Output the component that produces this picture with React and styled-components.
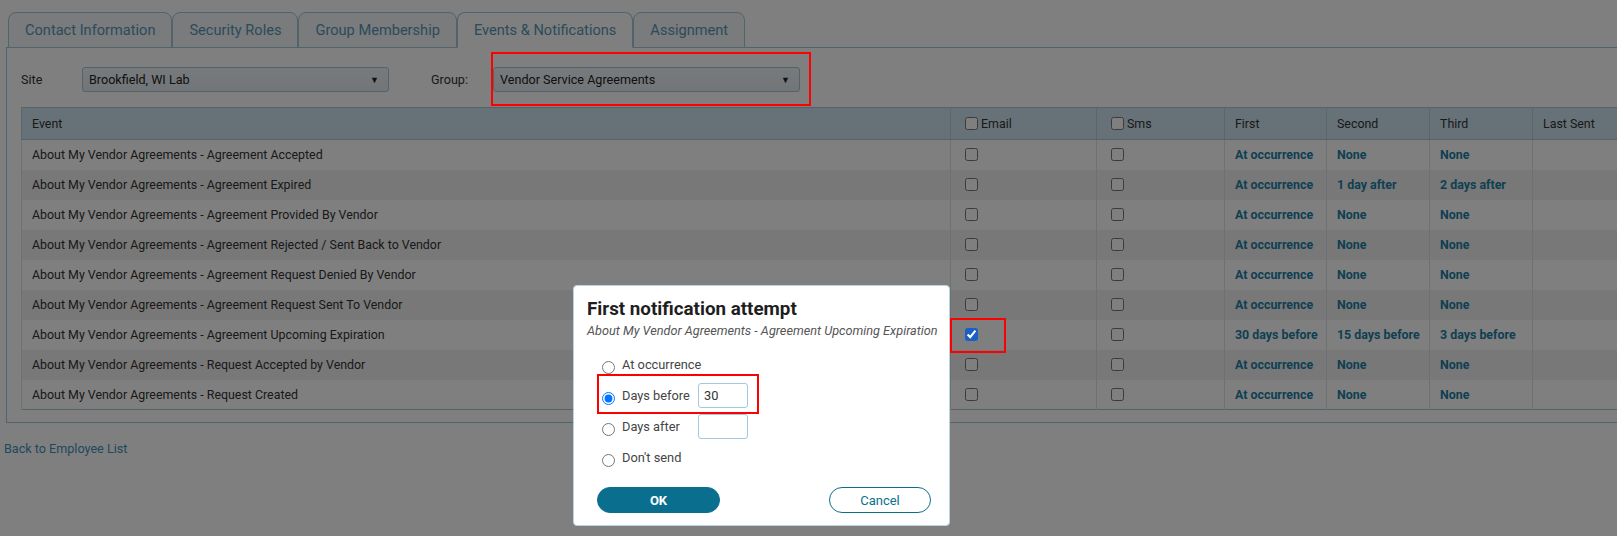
import React from 'react'
import styled, { createGlobalStyle } from 'styled-components'

const GlobalStyle = createGlobalStyle`
    html, body {
        margin: 0;
        padding: 0;
        overflow: hidden;
        background: #ffffff;
        font-family: Roboto, "Noto Sans", sans-serif;
        color: #333333;
    }
`

const TABS = ['Contact Information', 'Security Roles', 'Group Membership', 'Events & Notifications', 'Assignment']

const EVENTS = [
    ['Agreement Accepted', 'At occurrence', 'None', 'None'],
    ['Agreement Expired', 'At occurrence', '1 day after', '2 days after'],
    ['Agreement Provided By Vendor', 'At occurrence', 'None', 'None'],
    ['Agreement Rejected / Sent Back to Vendor', 'At occurrence', 'None', 'None'],
    ['Agreement Request Denied By Vendor', 'At occurrence', 'None', 'None'],
    ['Agreement Request Sent To Vendor', 'At occurrence', 'None', 'None'],
    ['Agreement Upcoming Expiration', '30 days before', '15 days before', '3 days before', true],
    ['Request Accepted by Vendor', 'At occurrence', 'None', 'None'],
    ['Request Created', 'At occurrence', 'None', 'None'],
]

const OPTIONS = [
    { label: 'At occurrence' },
    { label: 'Days before', input: '30', checked: true, marked: true },
    { label: 'Days after', input: '' },
    { label: "Don't send" },
]

const App = () => {
    return <>
        <GlobalStyle />
        <Page>
            <TabBar>
                {TABS.map((t) => <Tab key={t} $active={t === 'Events & Notifications'}>{t}</Tab>)}
            </TabBar>
            <Panel>
                <Filters>
                    <FilterLabel>Site</FilterLabel>
                    <Select>
                        <span>Brookfield, WI Lab</span>
                        <Arrow>▼</Arrow>
                    </Select>
                    <FilterLabel $gap>Group:</FilterLabel>
                    <Marked>
                        <Select>
                            <span>Vendor Service Agreements</span>
                            <Arrow>▼</Arrow>
                        </Select>
                        <Annotation $l={-2} $t={-15} $w={320} $h={54} />
                    </Marked>
                </Filters>
                <Table>
                    <colgroup>
                        <col style={{ width: 929 }} />
                        <col style={{ width: 146 }} />
                        <col style={{ width: 128 }} />
                        <col style={{ width: 102 }} />
                        <col style={{ width: 103 }} />
                        <col style={{ width: 103 }} />
                        <col style={{ width: 120 }} />
                    </colgroup>
                    <thead>
                        <tr>
                            <Th>Event</Th>
                            <Th><Check type="checkbox" readOnly />Email</Th>
                            <Th><Check type="checkbox" readOnly />Sms</Th>
                            <Th>First</Th>
                            <Th>Second</Th>
                            <Th>Third</Th>
                            <Th>Last Sent</Th>
                        </tr>
                    </thead>
                    <tbody>
                        {EVENTS.map(([name, first, second, third, on]) => (
                            <Row key={name}>
                                <Td>About My Vendor Agreements - {name}</Td>
                                <Td $marked={on}>
                                    <Check type="checkbox" checked={!!on} readOnly $raised={on} />
                                    {on && <Annotation $l={-1} $t={-2} $w={56} $h={35} />}
                                </Td>
                                <Td><Check type="checkbox" readOnly /></Td>
                                <Td><Schedule>{first}</Schedule></Td>
                                <Td><Schedule>{second}</Schedule></Td>
                                <Td><Schedule>{third}</Schedule></Td>
                                <Td></Td>
                            </Row>
                        ))}
                    </tbody>
                </Table>
            </Panel>
            <BackLink>Back to Employee List</BackLink>
        </Page>

        <Overlay />

        <Dialog>
            <DialogTitle>First notification attempt</DialogTitle>
            <DialogSub>About My Vendor Agreements - Agreement Upcoming Expiration</DialogSub>
            <Options>
                {OPTIONS.map((o) => (
                    <Option key={o.label}>
                        <Radio type="radio" name="first" defaultChecked={o.checked} />
                        <OptionLabel>{o.label}</OptionLabel>
                        {o.input !== undefined && <DaysInput defaultValue={o.input} />}
                        {o.marked && <Annotation $l={-5} $t={-6} $w={162} $h={40} />}
                    </Option>
                ))}
            </Options>
            <Buttons>
                <OkButton>OK</OkButton>
                <CancelButton>Cancel</CancelButton>
            </Buttons>
        </Dialog>
    </>
}

export default App

const Page = styled.div`
    width: 1700px;
    padding: 12px 0 0 6px;
`

const TabBar = styled.div`
    display: flex;
    gap: 0;
    padding-left: 2px;
    position: relative;
    z-index: 1;
`

const Tab = styled.div`
    height: 34px;
    padding: 0 16px;
    display: flex;
    align-items: center;
    font-size: 14.6px;
    color: #5796b6;
    background: ${(p) => (p.$active ? '#ffffff' : '#f2f7fa')};
    border: 1px solid #a3c6d6;
    border-bottom: ${(p) => (p.$active ? '1px solid #ffffff' : '1px solid #a3c6d6')};
    border-radius: 8px 8px 0 0;
    margin-bottom: -1px;
`

const Panel = styled.div`
    border: 1px solid #a3c6d6;
    padding: 19px 0 12px 14px;
`

const Filters = styled.div`
    display: flex;
    align-items: center;
    height: 25px;
    margin-bottom: 15px;
`

const FilterLabel = styled.div`
    font-size: 12.6px;
    color: #333333;
    width: ${(p) => (p.$gap ? '62px' : '61px')};
    margin-left: ${(p) => (p.$gap ? '42px' : '0')};
`

const Marked = styled.div`
    position: relative;
`

const Select = styled.div`
    width: 307px;
    height: 25px;
    box-sizing: border-box;
    display: flex;
    align-items: center;
    justify-content: space-between;
    padding: 0 9px 0 6px;
    font-size: 12.6px;
    color: #222222;
    background: linear-gradient(#f0f5f8, #e4ecf1);
    border: 1px solid #a9c4d2;
    border-radius: 3px;
`

const Arrow = styled.span`
    font-size: 9px;
    color: #222222;
`

const Annotation = styled.div`
    position: absolute;
    left: ${(p) => p.$l}px;
    top: ${(p) => p.$t}px;
    width: ${(p) => p.$w}px;
    height: ${(p) => p.$h}px;
    box-sizing: border-box;
    border: 2px solid #ff0000;
    z-index: 200;
    pointer-events: none;
`

const Table = styled.table`
    table-layout: fixed;
    width: 1631px;
    border-collapse: collapse;
    border: 1px solid #a9c4d2;
    font-size: 12.4px;
`

const Th = styled.th`
    height: 31px;
    padding: 0 10px;
    text-align: left;
    font-weight: normal;
    color: #333333;
    background: #cde3f0;
    border-left: 1px solid #b4cedb;
    border-bottom: 1px solid #a9c4d2;
    white-space: nowrap;
`

const Row = styled.tr`
    height: 30px;
    background: #ffffff;

    &:nth-child(even) {
        background: #f1f1f1;
    }
`

const Td = styled.td`
    position: ${(p) => (p.$marked ? 'relative' : 'static')};
    padding: 0 10px;
    color: #333333;
    border-left: 1px solid #d9e3e8;
    white-space: nowrap;
`

const Check = styled.input`
    width: 13px;
    height: 13px;
    margin: 0 3px 0 4px;
    vertical-align: -2px;
    accent-color: #1c5ec4;
    position: ${(p) => (p.$raised ? 'relative' : 'static')};
    z-index: ${(p) => (p.$raised ? 200 : 'auto')};
`

const Schedule = styled.span`
    font-weight: bold;
    color: #1d7fa4;
`

const BackLink = styled.div`
    margin: 18px 0 0 -2px;
    font-size: 12.6px;
    color: #3f93b8;
`

const Overlay = styled.div`
    position: fixed;
    inset: 0;
    background: rgba(0, 0, 0, 0.5);
    z-index: 100;
`

const Dialog = styled.div`
    position: fixed;
    left: 573px;
    top: 285px;
    width: 377px;
    height: 241px;
    box-sizing: border-box;
    padding: 11px 18px 12px 13px;
    background: #ffffff;
    border: 1px solid #b9d3df;
    border-radius: 4px;
    z-index: 300;
    display: flex;
    flex-direction: column;
`

const DialogTitle = styled.div`
    font-size: 18.8px;
    line-height: 24px;
    font-weight: bold;
    color: #1e1e1e;
`

const DialogSub = styled.div`
    margin-top: 2px;
    font-size: 12.7px;
    line-height: 16px;
    font-style: italic;
    color: #555555;
    white-space: nowrap;
`

const Options = styled.div`
    margin: 10px 0 0 15px;
    display: flex;
    flex-direction: column;
`

const Option = styled.label`
    position: relative;
    height: 31px;
    display: flex;
    align-items: center;
`

const Radio = styled.input`
    width: 13px;
    height: 13px;
    margin: 5px 7px 0 0;
`

const OptionLabel = styled.span`
    min-width: 76px;
    font-size: 12.8px;
    color: #444444;
    white-space: nowrap;
`

const DaysInput = styled.input`
    width: 50px;
    height: 25px;
    box-sizing: border-box;
    padding: 0 5px;
    font-family: inherit;
    font-size: 12.8px;
    color: #333333;
    border: 1px solid #a3c9dc;
    border-radius: 3px;
    outline: none;
`

const Buttons = styled.div`
    margin-top: auto;
    display: flex;
    justify-content: space-between;
    padding-left: 10px;
`

const Pill = styled.button`
    height: 26px;
    border-radius: 13px;
    font-family: inherit;
    font-size: 13px;
    border: 1px solid #0a6f8f;
`

const OkButton = styled(Pill)`
    width: 123px;
    background: #0a6f8f;
    color: #ffffff;
    font-weight: bold;
`

const CancelButton = styled(Pill)`
    width: 102px;
    background: #ffffff;
    color: #0a6f8f;
`
